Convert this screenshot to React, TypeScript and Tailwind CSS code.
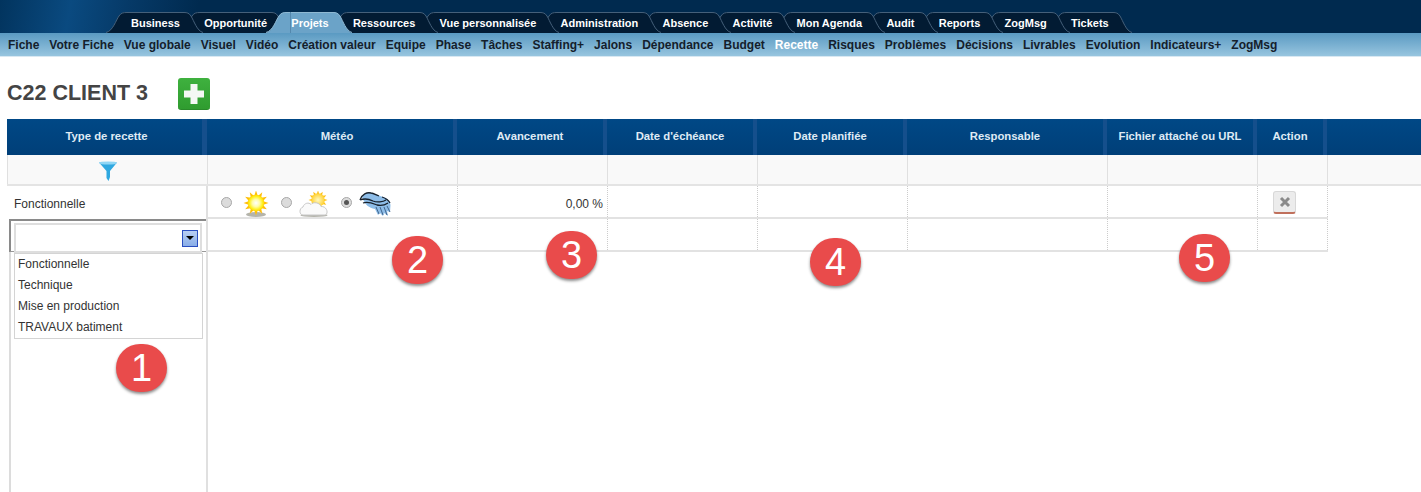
const tabs = [
  "Business",
  "Opportunité",
  "Projets",
  "Ressources",
  "Vue personnalisée",
  "Administration",
  "Absence",
  "Activité",
  "Mon Agenda",
  "Audit",
  "Reports",
  "ZogMsg",
  "Tickets",
]

const subMenu = [
  "Fiche",
  "Votre Fiche",
  "Vue globale",
  "Visuel",
  "Vidéo",
  "Création valeur",
  "Equipe",
  "Phase",
  "Tâches",
  "Staffing+",
  "Jalons",
  "Dépendance",
  "Budget",
  "Recette",
  "Risques",
  "Problèmes",
  "Décisions",
  "Livrables",
  "Evolution",
  "Indicateurs+",
  "ZogMsg",
]

const columns = [
  { name: "Météo", width: "w-[250px]" },
  { name: "Avancement", width: "w-[150px]" },
  { name: "Date d'échéance", width: "w-[150px]" },
  { name: "Date planifiée", width: "w-[150px]" },
  { name: "Responsable", width: "w-[200px]" },
  { name: "Fichier attaché ou URL", width: "w-[150px]" },
  { name: "Action", width: "w-[70px]" },
]

const options = ["Fonctionnelle", "Technique", "Mise en production", "TRAVAUX batiment"]

const badges = [
  { n: 1, pos: "left-[116px] top-[344px]" },
  { n: 2, pos: "left-[392px] top-[236px]" },
  { n: 3, pos: "left-[546px] top-[231px]" },
  { n: 4, pos: "left-[810px] top-[238px]" },
  { n: 5, pos: "left-[1179px] top-[234px]" },
]

function Tab({ name, index }: { name: string; index: number }) {
  const active = name === "Projets"
  const fill = active ? "#6ba3c8" : "#021b33"
  const line = active ? "#8fb9d3" : "#45607a"
  return (
    <div
      className={`relative h-[21px] px-[4px] pt-[2px] flex items-center text-[11px] font-bold text-white ${active ? "bg-[#6ba3c8]" : "bg-[#021b33]"}`}
      style={{ zIndex: active ? 50 : 40 - index }}
    >
      <svg className="absolute right-full top-0" width="21" height="21" viewBox="0 0 21 21">
        <path d="M0 21 C7 19 10 8 13 4 C15 1 17 0 21 0 V21 Z" fill={fill} />
        <path d="M0 20.5 C7 19 10 8 13 4 C15 1 17 0.5 21 0.5" fill="none" stroke={line} />
      </svg>
      <svg className="absolute left-full top-0" width="19" height="21" viewBox="0 0 19 21">
        <path d="M0 0 C3 0 5 1 7 4 C10 9 13 19 19 21 H0 Z" fill={fill} />
        <path d="M0 0.5 C3 0.5 5 1 7 4 C10 9 13 19 19 20.5" fill="none" stroke={line} />
      </svg>
      <div className={`absolute left-0 right-0 top-0 h-px ${active ? "bg-[#8fb9d3]" : "bg-[#45607a]"}`} />
      {active && <div className="absolute left-[3px] top-0 bottom-0 w-px bg-[#5488ad]" />}
      <span className="relative">{name}</span>
    </div>
  )
}

function Sun() {
  const rays = [0, 30, 60, 90, 120, 150, 180, 210, 240, 270, 300, 330]
  return (
    <svg width="26" height="26" viewBox="0 0 26 26">
      <defs>
        <radialGradient id="sunCore">
          <stop offset="0%" stopColor="#ffffff" />
          <stop offset="45%" stopColor="#fffca8" />
          <stop offset="80%" stopColor="#fff020" />
          <stop offset="100%" stopColor="#ffd800" />
        </radialGradient>
      </defs>
      <ellipse cx="13" cy="23.5" rx="10" ry="2.5" fill="#b4b4ac" />
      {rays.map((r) => (
        <path key={r} d="M10.8 6 L13 -0.5 L15.2 6 Z" fill="#ffbe0a" transform={`rotate(${r} 13 12)`} />
      ))}
      <circle cx="13" cy="12" r="8.2" fill="url(#sunCore)" />
    </svg>
  )
}

function CloudSun() {
  const rays = [-90, -60, -30, 0, 30, 60, 90, 120]
  return (
    <svg width="30" height="26" viewBox="0 0 30 26">
      <defs>
        <radialGradient id="cloudSunCore">
          <stop offset="0%" stopColor="#fff9c0" />
          <stop offset="100%" stopColor="#ffd030" />
        </radialGradient>
      </defs>
      {rays.map((r) => (
        <path key={r} d="M17.4 4 L19 -0.5 L20.6 4 Z" fill="#ffbe0a" transform={`rotate(${r} 19 9)`} />
      ))}
      <circle cx="19" cy="9" r="6.8" fill="url(#cloudSunCore)" />
      <ellipse cx="15" cy="24.3" rx="13.5" ry="1.7" fill="#b4b4ac" />
      <path
        d="M4 24 C0 24 0 17 4 16 C5 12 10 11 12 13.5 C14 10.5 21 11.5 22 15.5 C28 15 30 23 26 24 Z"
        fill="#fafafa"
        stroke="#c8c8c8"
      />
    </svg>
  )
}

function Storm() {
  return (
    <svg width="32" height="25" viewBox="0 0 32 25">
      <path
        d="M3 5 C5 1 9 0 13 1 C17 2 20 4 24 5 C28 6 31 9 31.5 13 L31 20 L28 19 L29 24 L25 21 L24 24 L21 21 L19 23 L16 17 C10 16 6 13 3 5 Z"
        fill="#8ebde8"
      />
      <path
        d="M1 8 C3 2 8 0 12 1 C15 1.5 17 3 20 4 M1 8 C6 6 10 7 14 9 C18 10.5 24 10 27 8 M4 11 C9 9 13 11 18 13 C22 14 26 13 29 11 M23 5 C26 6 29 7 31 11"
        fill="none"
        stroke="#17202b"
        strokeWidth="1.3"
      />
      <path d="M17 15 L20 22 M21 15 L24 23 M25 15 L28 23 M28 14 L31 20" stroke="#41658c" strokeWidth="1" />
    </svg>
  )
}

function Radio({ checked }: { checked?: boolean }) {
  return (
    <span className="w-[11px] h-[11px] rounded-full bg-[#dcdcdc] border border-[#a8a8a8] flex items-center justify-center shrink-0">
      {checked && <span className="w-[5px] h-[5px] rounded-full bg-[#555]" />}
    </span>
  )
}

export default function App() {
  return (
    <div className="relative flex flex-col w-full h-screen overflow-hidden bg-white font-['Liberation_Sans',Arial,sans-serif]">
      {/* bandeau du haut */}
      <div className="h-[33px] shrink-0 flex items-end pl-[127px] bg-[linear-gradient(100deg,#02345e_0%,#0a4a80_5%,#063a68_9%,#002a4f_14%,#002a4f_100%)]">
        <div className="flex gap-[16.25px]">
          {tabs.map((name, index) => (
            <Tab key={name} name={name} index={index} />
          ))}
        </div>
      </div>

      <div className="h-[24px] shrink-0 flex items-center gap-2.5 pl-2 text-xs font-bold text-[#14202c] bg-gradient-to-b from-[#5a9ac2] to-[#97c5df] border-b border-[#d8e8f2]">
        {subMenu.map((name) => (
          <span key={name} className={name === "Recette" ? "text-white" : ""}>
            {name}
          </span>
        ))}
      </div>

      <div className="h-[62px] shrink-0 flex items-center pl-[7px] pt-[10px]">
        <h1 className="w-[171px] text-[21.5px] font-bold text-[#444]">C22 CLIENT 3</h1>
        <div className="mt-[2px] w-[32px] h-[32px] rounded-[3px] bg-gradient-to-b from-[#3fb13f] to-[#2f9c2f] border-b border-[#2a8a2a] flex items-center justify-center">
          <svg width="24" height="24" viewBox="0 0 24 24">
            <path d="M8.5 2 H15.5 V8.5 H22 V15.5 H15.5 V22 H8.5 V15.5 H2 V8.5 H8.5 Z" fill="#f4f8f4" />
          </svg>
        </div>
      </div>

      {/* en-tete du tableau */}
      <div className="ml-[7px] h-[36px] shrink-0 flex text-[11.3px] font-bold text-[#dfeaf4] bg-gradient-to-b from-[#004886] to-[#003f78]">
        <div className="w-[200px] pl-[4px] pb-[2px] flex items-center justify-center border-r-[5px] border-[#154f8c]">
          Type de recette
        </div>
        {columns.map(({ name, width }) => (
          <div
            key={name}
            className={`${width} ${name === "Météo" ? "pl-[14px]" : ""} pb-[2px] flex items-center justify-center border-r-[4px] border-[#154f8c]`}
          >
            {name}
          </div>
        ))}
      </div>

      <div className="ml-[7px] h-[31px] shrink-0 flex bg-[#f9f9f9] border-b-2 border-[#e4e4e4]">
        <div className="w-[201px] pt-[2px] flex items-center justify-center border-x border-[#e0e0e0]">
          <svg width="18" height="20" viewBox="0 0 18 20">
            <path d="M0 1.5 H18 L11 10 V16 L9.5 20 L7.5 17 V10 Z" fill="#2fa8e0" />
            <ellipse cx="9" cy="2" rx="9" ry="1.6" fill="#8fd6f5" />
          </svg>
        </div>
        {columns.map(({ name, width }) => (
          <div key={name} className={`${width} border-r border-[#e0e0e0]`} />
        ))}
      </div>

      <div className="ml-[7px] flex flex-1 min-h-0">
        <div className="w-[201px] shrink-0 flex flex-col text-xs text-[#333] border-r-2 border-[#e0e0e0]">
          <div className="h-[33px] shrink-0 flex items-center pl-[7px] pt-[3px]">Fonctionnelle</div>
          <div className="relative flex-1 ml-[2px] border-l-2 border-[#dcdcdc]">
            <div className="-ml-[2px] h-[33px] border-t-2 border-l-2 border-[#8a8a8a] border-b border-b-[#999]">
              <div className="ml-[3px] mt-[2px] w-[188px] h-[30px] bg-white border-2 border-[#dedede] flex items-center justify-end pr-[2px]">
                <div className="w-[16px] h-[17px] bg-gradient-to-b from-[#b8cef2] to-[#8aaee8] border border-[#2a4ec0] flex items-center justify-center">
                  <span className="w-0 h-0 border-x-[4px] border-x-transparent border-t-[4px] border-t-black" />
                </div>
              </div>
            </div>
            <div className="absolute left-[3px] top-[34px] w-[189px] h-[86px] bg-white border border-[#d4d4d4] flex flex-col pl-[3px] text-[#333]">
              {options.map((o) => (
                <div key={o} className="h-[21px] pb-[2px] flex items-center">
                  {o}
                </div>
              ))}
            </div>
          </div>
        </div>

        <div className="flex flex-col text-xs text-[#333]">
          <div className="h-[33px] flex border-b-2 border-[#e2e2e2]">
            <div className="w-[250px] flex items-center pl-[13px] pt-[2px] border-r border-dotted border-[#ccc]">
              <div className="w-[60px] flex items-center gap-[7px]">
                <Radio />
                <span className="ml-[4px] mt-[3px]"><Sun /></span>
              </div>
              <div className="w-[60px] flex items-center gap-[7px]">
                <Radio />
                <span className="mt-[3px]"><CloudSun /></span>
              </div>
              <div className="w-[60px] flex items-center gap-[7px]">
                <Radio checked />
                <span className="mt-[3px]"><Storm /></span>
              </div>
            </div>
            <div className="w-[150px] flex items-center justify-end pr-[4px] pt-[4px] border-r border-dotted border-[#ccc]">
              0,00 %
            </div>
            <div className="w-[150px] border-r border-dotted border-[#ccc]" />
            <div className="w-[150px] border-r border-dotted border-[#ccc]" />
            <div className="w-[200px] border-r border-dotted border-[#ccc]" />
            <div className="w-[150px] border-r border-dotted border-[#ccc]" />
            <div className="w-[70px] flex items-center pl-[15px] pt-[2px] border-r border-dotted border-[#ccc]">
              <div className="w-[23px] h-[23px] rounded-[3px] bg-[#ececec] border border-[#d8d8d8] border-b-2 border-b-[#c0705c] flex items-center justify-center">
                <svg width="12" height="12" viewBox="0 0 12 12">
                  <path d="M2 2 L10 10 M10 2 L2 10" stroke="#8a8a8a" strokeWidth="3" />
                </svg>
              </div>
            </div>
          </div>
          <div className="h-[33px] flex border-b-2 border-[#e2e2e2]">
            {columns.map(({ name, width }) => (
              <div key={name} className={`${width} border-r border-dotted border-[#ccc]`} />
            ))}
          </div>
        </div>
      </div>

      {badges.map(({ n, pos }) => (
        <div
          key={n}
          className={`absolute ${pos} w-[51px] h-[48px] rounded-full bg-[#e94b4b] text-white text-[38px] leading-none flex items-center justify-center shadow-[0_2px_3px_rgba(0,0,0,0.45)]`}
        >
          {n}
        </div>
      ))}
    </div>
  )
}
